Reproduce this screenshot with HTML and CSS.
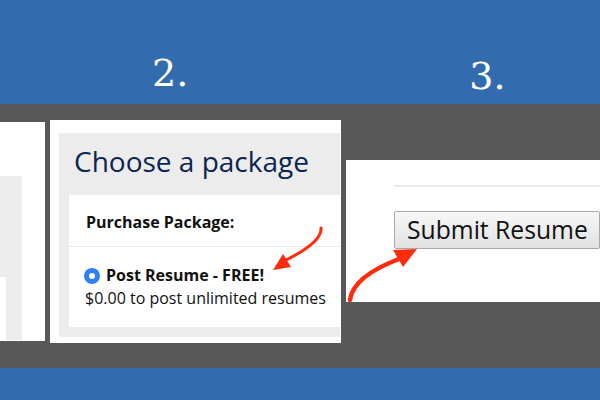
FILE: index.html
```html
<!DOCTYPE html>
<html lang="en">
<head>
<meta charset="utf-8">
<title>Post a resume</title>
<link rel="stylesheet" href="styles.css">
</head>
<body>
<div class="page">
  <header class="steps">
    <span class="num n2">2.</span>
    <span class="num n3">3.</span>
  </header>
  <main class="stage">
    <section class="panel p1">
      <div class="strip"><div class="strip-inner"></div></div>
    </section>
    <section class="panel p2">
      <div class="pkg">
        <h2 class="pkg-title">Choose a package</h2>
        <div class="pkg-body">
          <div class="pkg-head">Purchase Package:</div>
          <div class="pkg-opt">
            <div class="opt-line"><span class="radio"></span><span class="opt-name">Post Resume - FREE!</span></div>
            <div class="opt-desc">$0.00 to post unlimited resumes</div>
          </div>
        </div>
      </div>
    </section>
    <section class="panel p3">
      <div class="rule"></div>
      <button class="submit" type="button">Submit Resume</button>
    </section>
  </main>
  <footer class="bottom"></footer>
  <svg class="arrows" width="600" height="400" viewBox="0 0 600 400" aria-hidden="true">
    <path d="M321 228 C322 239 306 250 286 260" fill="none" stroke="#ff2b0c" stroke-width="3" stroke-linecap="round"/>
    <polygon points="273,270 283,254 291,267" fill="#ff2b0c"/>
    <path d="M350 300 C352 284 370 270 399 259" fill="none" stroke="#ff2b0c" stroke-width="4.5" stroke-linecap="round"/>
    <polygon points="417,249 393,250 403,267" fill="#ff2b0c"/>
  </svg>
</div>
</body>
</html>
```
FILE: styles.css
```css
html, body {
  margin: 0;
  padding: 0;
}
.page {
  position: relative;
  width: 600px;
  height: 400px;
  overflow: hidden;
  font-family: "Open Sans", "Liberation Sans", sans-serif;
}
.steps {
  height: 104px;
  box-sizing: border-box;
  background: #336cae;
  display: flex;
  align-items: flex-start;
  padding-left: 152px;
  color: #ffffff;
  font-family: "DejaVu Serif", "Liberation Serif", serif;
  font-size: 38px;
  line-height: 38px;
}
.num {
  display: block;
}
.n2 {
  padding-top: 54px;
}
.n3 {
  padding-top: 57px;
  margin-left: 281px;
}
.stage {
  height: 264px;
  background: #585858;
  display: flex;
  align-items: flex-start;
}
.panel {
  background: #ffffff;
  box-sizing: border-box;
}
.p1 {
  width: 45px;
  height: 219px;
  margin-top: 18px;
  padding-top: 54px;
}
.strip {
  width: 22px;
  height: 164px;
  box-sizing: border-box;
  padding-top: 101px;
  background: #ececec;
}
.strip-inner {
  width: 6px;
  height: 63px;
  background: #ffffff;
}
.p2 {
  width: 291px;
  height: 223px;
  margin-left: 5px;
  margin-top: 16px;
  padding: 13px 1px 6px 9px;
}
.pkg {
  height: 204px;
  box-sizing: border-box;
  background: #ececec;
  padding: 0 0 10px 10px;
  display: flex;
  flex-direction: column;
}
.pkg-title {
  margin: 0;
  height: 62px;
  box-sizing: border-box;
  padding: 10px 0 0 5px;
  font-size: 28px;
  line-height: 36px;
  font-weight: 400;
  color: #0c2451;
  white-space: nowrap;
}
.pkg-body {
  flex: 1;
  background: #ffffff;
  padding-left: 17px;
}
.pkg-head {
  height: 52px;
  box-sizing: border-box;
  padding-top: 17px;
  border-bottom: 1px dotted #dcdcdc;
  margin-left: -17px;
  padding-left: 17px;
  font-size: 16px;
  line-height: 20px;
  font-weight: 700;
  color: #111111;
}
.pkg-opt {
  padding-top: 17px;
  font-size: 16px;
  line-height: 23px;
  color: #111111;
  white-space: nowrap;
}
.opt-line {
  display: flex;
  align-items: center;
  gap: 6px;
}
.radio {
  width: 16px;
  height: 16px;
  margin-left: -2px;
  border-radius: 50%;
  background: #2f7ff6;
  display: flex;
  align-items: center;
  justify-content: center;
}
.radio::after {
  content: "";
  width: 6px;
  height: 6px;
  border-radius: 50%;
  background: #ffffff;
}
.opt-name {
  font-weight: 700;
}
.opt-desc {
  margin-left: -1px;
}
.p3 {
  flex: 1;
  height: 142px;
  margin-left: 5px;
  margin-top: 56px;
  padding: 25px 0 0 48px;
}
.rule {
  height: 2px;
  background: #e9e9e9;
}
.submit {
  display: block;
  margin-top: 24px;
  width: 206px;
  height: 38px;
  box-sizing: border-box;
  padding: 0 0 0 12px;
  border: 1px solid #a8a8a8;
  border-radius: 2px;
  background: linear-gradient(#f7f7f7, #e2e2e2);
  font-family: "Open Sans", "Liberation Sans", sans-serif;
  font-size: 24.7px;
  line-height: 34px;
  color: #111111;
  text-align: left;
  white-space: nowrap;
}
.bottom {
  height: 32px;
  background: #336cae;
}
.arrows {
  position: absolute;
  top: 0;
  left: 0;
  pointer-events: none;
}
```
